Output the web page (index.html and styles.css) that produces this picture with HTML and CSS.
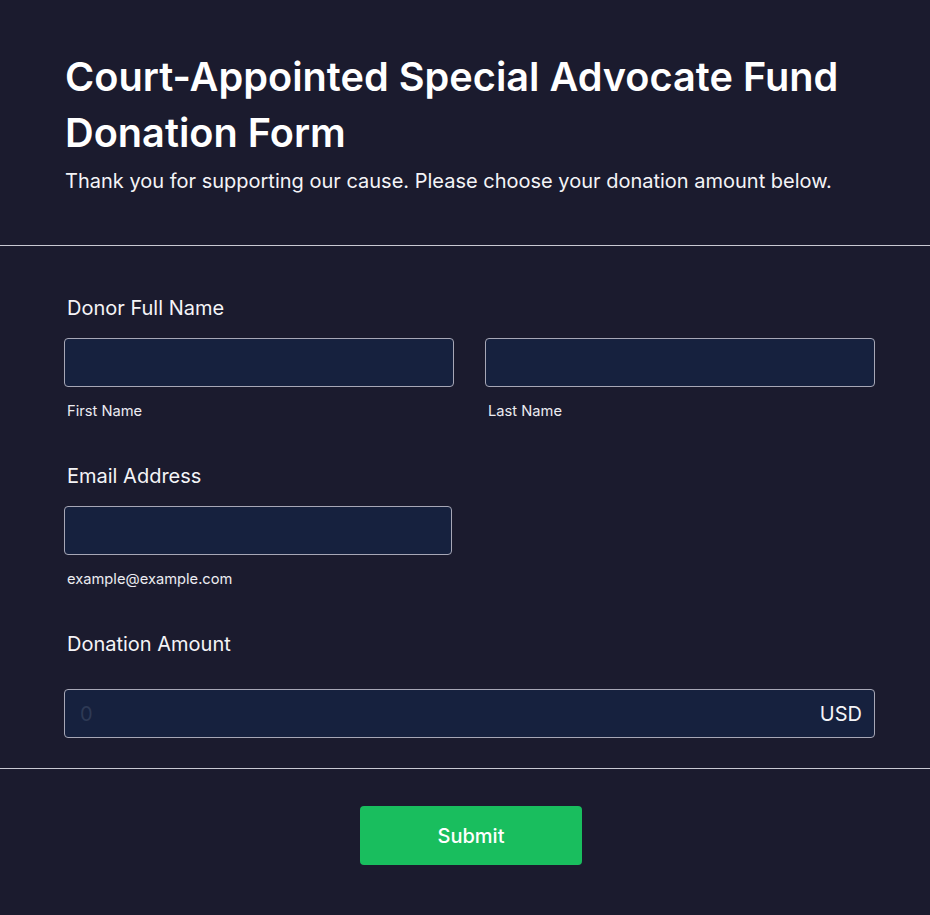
FILE: index.html
```html
<!DOCTYPE html>
<html lang="en">
<head>
<meta charset="utf-8">
<title>Donation Form</title>
<link rel="stylesheet" href="styles.css">
</head>
<body>
<main class="form">
  <header class="form-header">
    <h1 class="title">Court-Appointed Special Advocate Fund Donation Form</h1>
    <p class="subtitle">Thank you for supporting our cause. Please choose your donation amount below.</p>
  </header>
  <section class="form-body">
    <div class="field">
      <label class="label">Donor Full Name</label>
      <div class="name-row">
        <div class="sub-field">
          <input class="input" type="text">
          <span class="hint">First Name</span>
        </div>
        <div class="sub-field">
          <input class="input" type="text">
          <span class="hint">Last Name</span>
        </div>
      </div>
    </div>
    <div class="field">
      <label class="label">Email Address</label>
      <div class="sub-field email">
        <input class="input" type="email">
        <span class="hint">example@example.com</span>
      </div>
    </div>
    <div class="field amount-field">
      <label class="label">Donation Amount</label>
      <div class="amount-box">
        <span class="amount-placeholder">0</span>
        <span class="currency">USD</span>
      </div>
    </div>
  </section>
  <footer class="form-footer">
    <button class="submit" type="button">Submit</button>
  </footer>
</main>
</body>
</html>
```
FILE: styles.css
```css
* { box-sizing: border-box; }
html, body {
  margin: 0;
  padding: 0;
  background: #1b1b2e;
}
body {
  font-family: Inter, "Noto Sans", sans-serif;
  color: #ffffff;
  min-height: 915px;
}
.form {
  display: flex;
  flex-direction: column;
}
.form-header {
  padding: 49px 55px 49px 65px;
  border-bottom: 1px solid #c9c9d2;
}
.title {
  margin: 0;
  font-size: 39.7px;
  line-height: 56px;
  font-weight: 600;
  letter-spacing: 0;
}
.subtitle {
  margin: 5px 0 0;
  font-size: 20px;
  line-height: 30px;
  font-weight: 400;
  color: #f4f4f7;
}
.form-body {
  padding: 47px 55px 30px 64px;
  border-bottom: 1px solid #c9c9d2;
  display: flex;
  flex-direction: column;
  gap: 39px;
}
.field {
  display: flex;
  flex-direction: column;
}
.label {
  display: block;
  padding-left: 3px;
  font-size: 20px;
  line-height: 30px;
  font-weight: 400;
  color: #f4f4f7;
  margin-bottom: 15px;
}
.name-row {
  display: flex;
  gap: 31px;
}
.sub-field {
  display: flex;
  flex-direction: column;
  flex: 1;
}
.sub-field.email {
  flex: none;
  width: 388px;
}
.input {
  display: block;
  width: 100%;
  height: 49px;
  margin: 0;
  background: #16213e;
  border: 1px solid #a7a7b6;
  border-radius: 4px;
  color: #fff;
  font: inherit;
  padding: 0 12px;
}
.hint {
  margin-top: 13px;
  padding-left: 3px;
  font-size: 14.7px;
  line-height: 22px;
  color: #ececf1;
}
.amount-field .label {
  margin-bottom: 30px;
}
.amount-box {
  height: 49px;
  background: #16213e;
  border: 1px solid #a7a7b6;
  border-radius: 4px;
  display: flex;
  align-items: center;
  justify-content: space-between;
  padding: 0 12px 0 15px;
}
.amount-placeholder {
  font-size: 20px;
  color: #2e3a55;
}
.currency {
  font-size: 20px;
  color: #f4f4f7;
}
.form-footer {
  display: flex;
  justify-content: center;
  padding: 37px 55px 50px 67px;
}
.submit {
  width: 222px;
  height: 59px;
  background: #19be5e;
  border: none;
  border-radius: 4px;
  color: #fff;
  font-family: inherit;
  font-size: 20px;
  font-weight: 500;
  cursor: pointer;
}
```
